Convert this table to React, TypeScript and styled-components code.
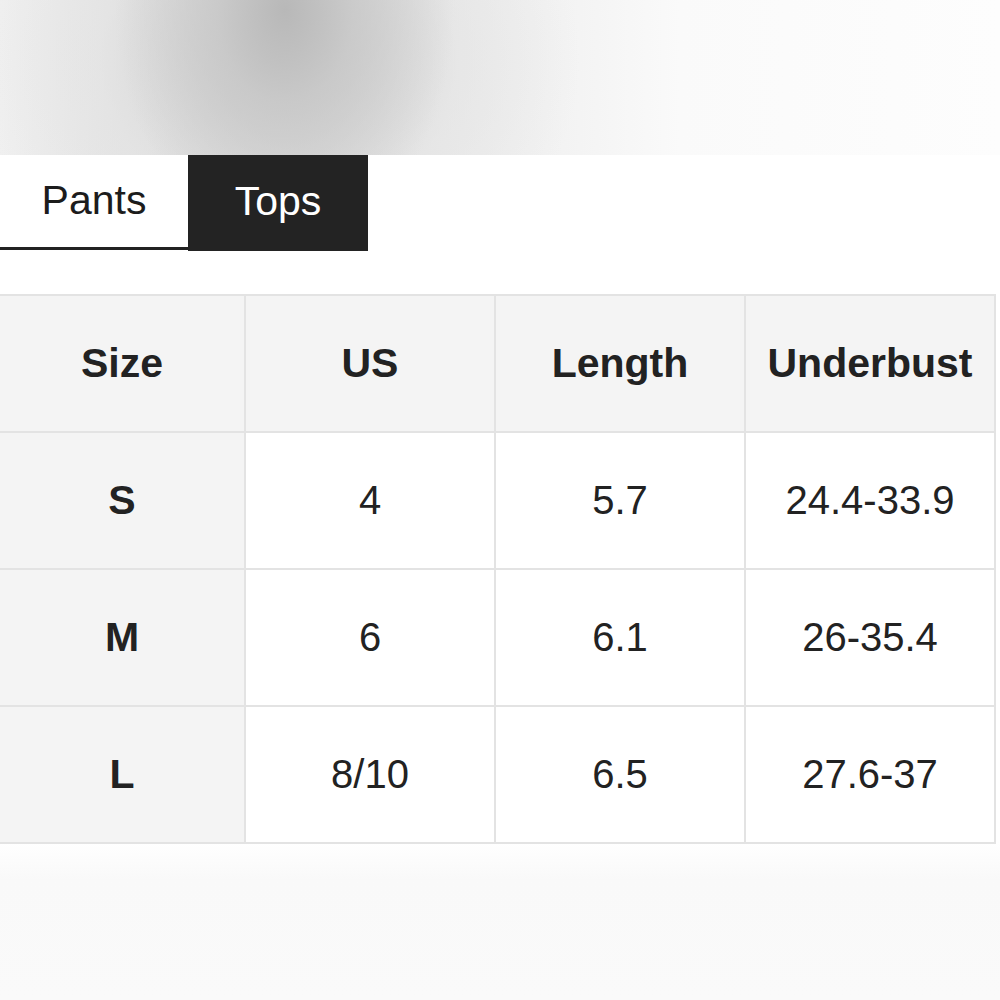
import React from "react";
import styled, { createGlobalStyle } from "styled-components";

const Global = createGlobalStyle`
  html, body { margin: 0; padding: 0; background: #ffffff; }
  body { font-family: "Liberation Sans", Arial, sans-serif; }
`;

const Page = styled.div`
  width: 1000px;
  height: 1000px;
  overflow: hidden;
  display: flex;
  flex-direction: column;
  background: linear-gradient(180deg, #ffffff 0px, #ffffff 842px, #f9f9f9 880px, #fafafa 1000px);
`;

const Hero = styled.div`
  height: 155px;
  flex: none;
  background:
    radial-gradient(ellipse 170px 230px at 285px 10px, rgba(184,184,184,1) 0%, rgba(196,196,196,0.7) 40%, rgba(220,220,220,0) 100%),
    radial-gradient(ellipse 300px 260px at 280px 60px, rgba(205,205,205,0.9) 0%, rgba(225,225,225,0.5) 60%, rgba(240,240,240,0) 100%),
    linear-gradient(90deg, #f0f0f0 0px, #e6e6e6 120px, #e4e4e4 300px, #eeeeee 480px, #fafafa 680px, #fdfdfd 1000px);
`;

const TabBar = styled.div`
  display: flex;
  height: 96px;
  flex: none;
`;

const Tab = styled.div<{ $active?: boolean; $width: number }>`
  width: ${(p) => p.$width}px;
  box-sizing: border-box;
  display: flex;
  align-items: center;
  justify-content: center;
  font-size: 41px;
  color: ${(p) => (p.$active ? "#ffffff" : "#1c1c1c")};
  background: ${(p) => (p.$active ? "#232323" : "#ffffff")};
  border-bottom: ${(p) => (p.$active ? "none" : "3px solid #222222")};
  padding-bottom: ${(p) => (p.$active ? "4px" : "1px")};
  margin-bottom: ${(p) => (p.$active ? "0" : "1px")};
`;

const Grid = styled.div`
  margin-top: 43px;
  width: 996px;
  box-sizing: border-box;
  padding: 2px 2px 2px 0;
  display: grid;
  grid-template-columns: 244px 248px 248px 248px;
  grid-auto-rows: 135px;
  gap: 2px;
  background: #e3e3e3;
`;

const Cell = styled.div<{ $bold?: boolean; $shaded?: boolean }>`
  display: flex;
  align-items: center;
  justify-content: center;
  background: ${(p) => (p.$shaded ? "#f4f4f4" : "#ffffff")};
  font-size: ${(p) => (p.$bold ? "41px" : "40px")};
  font-weight: ${(p) => (p.$bold ? 700 : 400)};
  color: #222222;
`;

const headers = ["Size", "US", "Length", "Underbust"];
const rows = [
  ["S", "4", "5.7", "24.4-33.9"],
  ["M", "6", "6.1", "26-35.4"],
  ["L", "8/10", "6.5", "27.6-37"],
];

export default function App() {
  return (
    <>
      <Global />
      <Page>
        <Hero />
        <TabBar>
          <Tab $width={188}>Pants</Tab>
          <Tab $width={180} $active>
            Tops
          </Tab>
        </TabBar>
        <Grid>
          {headers.map((h) => (
            <Cell key={h} $bold $shaded>
              {h}
            </Cell>
          ))}
          {rows.map((r) =>
            r.map((v, i) => (
              <Cell key={r[0] + i} $bold={i === 0} $shaded={i === 0}>
                {v}
              </Cell>
            ))
          )}
        </Grid>
      </Page>
    </>
  );
}
